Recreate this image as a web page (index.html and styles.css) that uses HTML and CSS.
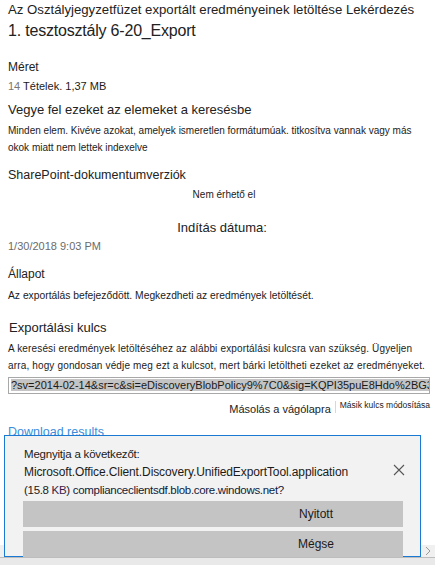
FILE: index.html
```html
<!DOCTYPE html>
<html lang="hu">
<head>
<meta charset="utf-8">
<title>Exportálás letöltése</title>
<link rel="stylesheet" href="styles.css">
</head>
<body>
<main class="panel">
  <div class="title-sub">Az Osztályjegyzetfüzet exportált eredményeinek letöltése Lekérdezés</div>
  <h1 class="title-main">1. tesztosztály 6-20_Export</h1>

  <div class="label size-label">Méret</div>
  <div class="size-value"><span class="muted">14</span> Tételek. 1,37 MB</div>

  <div class="heading include-heading">Vegye fel ezeket az elemeket a keresésbe</div>
  <p class="small-text include-text">Minden elem. Kivéve azokat, amelyek ismeretlen formátumúak. titkosítva vannak vagy más okok miatt nem lettek indexelve</p>

  <div class="heading sp-heading">SharePoint-dokumentumverziók</div>
  <div class="small-text centered na-text">Nem érhető el</div>

  <div class="heading centered start-heading">Indítás dátuma:</div>
  <div class="date-value">1/30/2018 9:03 PM</div>

  <div class="label state-label">Állapot</div>
  <div class="small-text state-text">Az exportálás befejeződött. Megkezdheti az eredmények letöltését.</div>

  <div class="heading key-heading">Exportálási kulcs</div>
  <p class="key-text">A keresési eredmények letöltéséhez az alábbi exportálási kulcsra van szükség. Ügyeljen arra, hogy gondosan védje meg ezt a kulcsot, mert bárki letöltheti ezeket az eredményeket.</p>
  <div class="key-box"><span class="key-selected">?sv=2014-02-14&amp;sr=c&amp;si=eDiscoveryBlobPolicy9%7C0&amp;sig=KQPI35puE8Hdo%2BG3c%2FexportKey</span></div>

  <div class="key-actions">
    <span class="copy-link">Másolás a vágólapra</span>
    <span class="action-sep"></span>
    <span class="regen-link">Másik kulcs módosítása</span>
  </div>

  <div class="download-link">Download results</div>
</main>

<div class="scrollbar">
  <span class="scroll-arrow">
    <svg width="6" height="10" viewBox="0 0 6 10"><path d="M1 1 L5 5 L1 9" fill="none" stroke="#9a9a9a" stroke-width="1"/></svg>
  </span>
</div>

<div class="open-dialog">
  <div class="dialog-head">
    <div class="dialog-msg">
      <div class="msg-line msg-first">Megnyitja a következőt:</div>
      <div class="msg-line msg-app">Microsoft.Office.Client.Discovery.UnifiedExportTool.application</div>
      <div class="msg-line msg-src">(15.8 <span class="kb">KB</span>) <span class="host">complianceclientsdf.blob.core.windows.net?</span></div>
    </div>
    <button class="dialog-close" type="button" aria-label="Bezárás">
      <svg width="12" height="12" viewBox="0 0 12 12"><path d="M1 1 L11 11 M11 1 L1 11" stroke="#555" stroke-width="1.1" fill="none"/></svg>
    </button>
  </div>
  <div class="dialog-btn">Nyitott</div>
  <div class="dialog-btn">Mégse</div>
</div>
</body>
</html>
```

FILE: styles.css
```css
html, body {
  margin: 0;
  padding: 0;
  background: #ffffff;
}

body {
  width: 435px;
  height: 565px;
  overflow: hidden;
  position: relative;
  font-family: "Liberation Sans", Arial, sans-serif;
  color: #1b1b1b;
}

.panel {
  padding: 0 5px 0 8px;
}

p { margin: 0; }

.title-sub {
  margin-top: 1px;
  font-size: 13.2px;
  line-height: 18px;
  color: #222;
  white-space: nowrap;
}

.title-main {
  margin: 0;
  font-weight: normal;
  font-size: 16px;
  line-height: 24px;
  color: #222;
  letter-spacing: -0.2px;
}

.label {
  font-size: 12px;
  line-height: 16px;
  color: #222;
}

.heading {
  font-size: 13px;
  line-height: 18px;
  color: #222;
}

.small-text {
  font-size: 10px;
  line-height: 17px;
  color: #1b1b1b;
}

.centered {
  text-align: center;
}

.muted { color: #777; }

.size-label { margin-top: 16px; }

.size-value {
  margin-top: 4px;
  font-size: 11px;
  line-height: 14px;
}

.include-heading { margin-top: 8px; }
.include-text { margin-top: 3px; }

.sp-heading { margin-top: 10px; font-size: 12.5px; }

.na-text {
  margin-top: 4px;
  line-height: 14px;
  padding-left: 10px;
}

.start-heading {
  margin-top: 17px;
  font-size: 13px;
  padding-left: 6px;
}

.date-value {
  margin-top: 1px;
  font-size: 11px;
  line-height: 16px;
  color: #6b6b6b;
}

.state-label { margin-top: 12px; }

.state-text {
  margin-top: 7px;
  line-height: 14px;
  font-size: 10.3px;
}

.key-heading {
  margin-top: 16px;
  padding-left: 1px;
}

.key-text {
  margin-top: 3px;
  font-size: 10px;
  line-height: 17px;
  color: #1b1b1b;
  letter-spacing: 0.15px;
}

.key-box {
  margin-top: 3px;
  height: 15px;
  border: 1px solid #a8a8a8;
  padding: 0 0 0 2px;
  overflow: hidden;
  white-space: nowrap;
  font-size: 11px;
  line-height: 15px;
}

.key-selected {
  background: #c4c4c4;
  color: #1b1b1b;
}

.key-actions {
  display: flex;
  justify-content: flex-end;
  align-items: flex-start;
  gap: 4px;
  margin-top: 5px;
  height: 16px;
  white-space: nowrap;
}

.copy-link {
  font-size: 11px;
  line-height: 16px;
  margin-top: 2px;
  color: #222;
}

.action-sep {
  width: 1px;
  height: 12px;
  background: #d8d8d8;
  margin-top: 2px;
}

.regen-link {
  font-size: 8.5px;
  line-height: 12px;
  color: #222;
}

.download-link {
  margin-top: 8px;
  font-size: 12.5px;
  line-height: 18px;
  color: #3b8ddc;
}

.scrollbar {
  position: absolute;
  left: 0;
  right: 0;
  top: 545px;
  height: 12px;
  background: #f0f0f0;
  border-bottom: 1px solid #bdbdbd;
  display: flex;
  justify-content: flex-end;
  align-items: center;
}

.scrollbar::after {
  content: "";
  position: absolute;
  left: 0;
  right: 0;
  top: 13px;
  height: 8px;
  background: #e9e9e9;
}

.scroll-arrow {
  display: flex;
  width: 13px;
  justify-content: center;
  margin-right: 1px;
}

.open-dialog {
  position: absolute;
  left: 4px;
  top: 435px;
  width: 415px;
  height: 120px;
  border: 1px solid #1a79d2;
  background: #f2f2f2;
  display: flex;
  flex-direction: column;
}

.dialog-head {
  display: flex;
  align-items: flex-start;
  padding: 9px 0 0 19px;
  height: 52px;
}

.dialog-msg {
  flex: 1;
  font-size: 12px;
  line-height: 18px;
  color: #1b1b1b;
  white-space: nowrap;
}

.msg-first { font-size: 11.5px; letter-spacing: -0.2px; }
.msg-app { font-size: 12px; letter-spacing: -0.1px; }
.msg-src { font-size: 11.5px; letter-spacing: -0.3px; }

.kb { color: #3a1e4a; }
.host { color: #0e1a3a; }

.dialog-close {
  border: 0;
  background: transparent;
  padding: 0;
  margin: 19px 15px 0 0;
  width: 12px;
  height: 12px;
  display: flex;
}

.dialog-btn {
  margin: 4px 0 0 18px;
  width: 380px;
  height: 26px;
  background: #c4c4c4;
  font-size: 12px;
  line-height: 26px;
  color: #1b1b1b;
  padding-left: 206px;
  box-sizing: border-box;
  text-align: center;
}

.dialog-btn + .dialog-btn {
  margin-top: 4px;
}
```
